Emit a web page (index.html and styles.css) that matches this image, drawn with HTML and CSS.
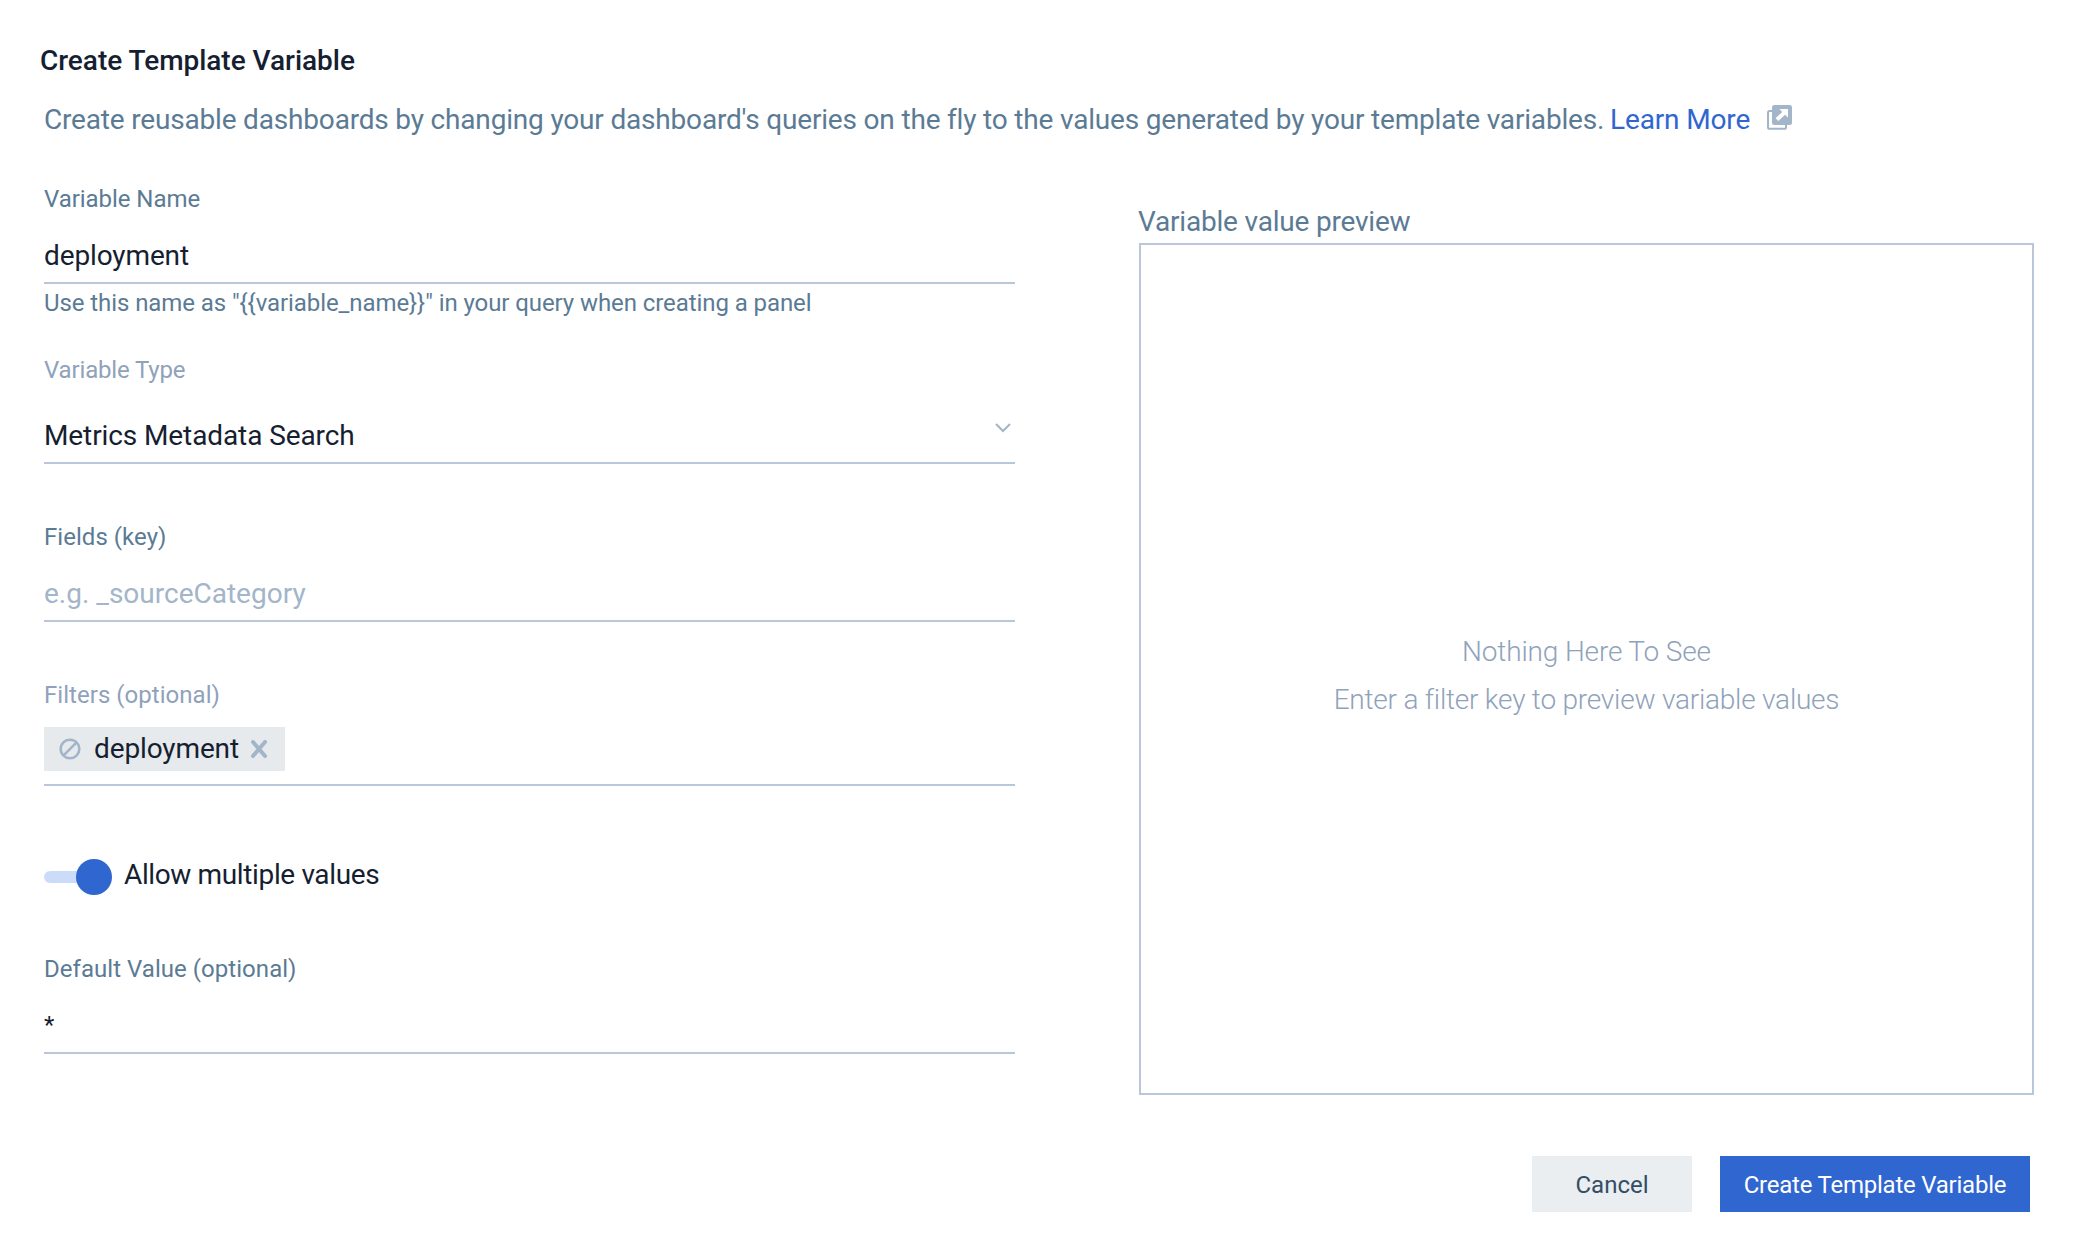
FILE: index.html
```html
<!DOCTYPE html>
<html lang="en">
<head>
<meta charset="utf-8">
<title>Create Template Variable</title>
<link rel="stylesheet" href="styles.css">
</head>
<body>
<main class="dialog">
  <h1 class="title">Create Template Variable</h1>
  <p class="intro"><span class="intro-text">Create reusable dashboards by changing your dashboard's queries on the fly to the values generated by your template variables.</span><a class="link" href="#">Learn More</a><svg class="external" width="26" height="26" viewBox="0 0 26 26"><path d="M5 6H2.600A1.600 1.600 0 0 0 1 7.600V22.200a1.600 1.600 0 0 0 1.600 1.600H17.400A1.600 1.600 0 0 0 19 22.200V20" fill="none" stroke="#a3b5c9" stroke-width="2"/><rect x="5" y="0" width="20" height="20" rx="2.500" fill="#a3b5c9"/><path d="M12.500 4h8.500v8.500l-3-2.800-6.600 6.400-2.800-2.800 6.600-6.400z" fill="#fff"/></svg></p>
  <div class="columns">
    <form class="form">
      <div class="field">
        <label class="label name">Variable Name</label>
        <div class="value deploy">deployment</div>
        <div class="hint">Use this name as "{{variable_name}}" in your query when creating a panel</div>
      </div>
      <div class="field type">
        <label class="label muted type-label">Variable Type</label>
        <div class="value select"><span>Metrics Metadata Search</span><svg class="chevron" width="18" height="12" viewBox="0 0 18 12"><path d="M2 2l7 7 7-7" fill="none" stroke="#a3b5c9" stroke-width="2"/></svg></div>
      </div>
      <div class="field keys">
        <label class="label">Fields (key)</label>
        <div class="value placeholder">e.g. _sourceCategory</div>
      </div>
      <div class="field filters">
        <label class="label muted">Filters (optional)</label>
        <div class="tags">
          <span class="chip"><svg width="22" height="22" viewBox="0 0 22 22"><g fill="none" stroke="#a3b5c9" stroke-width="2.600"><circle cx="11" cy="11" r="9.300"/><path d="M4.600 17.400L17.400 4.600"/></g></svg><span class="deploy chip-text">deployment</span><svg width="16" height="18" viewBox="0 0 16 18"><path d="M2 2l12 14M14 2L2 16" fill="none" stroke="#a3b5c9" stroke-width="4" stroke-linecap="round"/></svg></span>
        </div>
      </div>
      <div class="toggle-row">
        <span class="toggle"><span class="thumb"></span></span>
        <span class="toggle-text">Allow multiple values</span>
      </div>
      <div class="field default">
        <label class="label">Default Value (optional)</label>
        <div class="value star">*</div>
      </div>
    </form>
    <section class="preview">
      <h2 class="preview-title">Variable value preview</h2>
      <div class="preview-box">
        <p class="empty-title">Nothing Here To See</p>
        <p class="empty-text">Enter a filter key to preview variable values</p>
      </div>
    </section>
  </div>
  <footer class="actions">
    <button class="button cancel">Cancel</button>
    <button class="button primary">Create Template Variable</button>
  </footer>
</main>
</body>
</html>
```
FILE: styles.css
```css
* { box-sizing: border-box; }
body {
  margin: 0;
  background: #fff;
  color: #161e31;
  font: 400 28px/41px Roboto, sans-serif;
}
h1, h2, p { margin: 0; font-size: 28px; }
.dialog { height: 1256px; padding: 40px 54px 0 44px; }
.title { margin-left: -4px; font-weight: 500; letter-spacing: -0.03px; }
.intro { display: flex; margin-top: 18px; color: #5b7b95; }
.intro-text { width: 1566px; white-space: nowrap; letter-spacing: -0.18px; }
.link { color: #2f66d0; text-decoration: none; letter-spacing: -0.14px; }
.external { margin: 6px 0 0 17px; }
.columns { display: flex; justify-content: space-between; margin-top: 43px; }
.form { width: 971px; }
.label, .hint {
  display: block;
  color: #5b7b95;
  font-size: 24px;
  line-height: 32px;
}
.label { letter-spacing: 0.04px; }
.label.muted { color: #8fa2ba; }
.label.name { letter-spacing: -0.05px; }
.label.type-label { letter-spacing: -0.16px; }
.hint { margin-top: 3px; letter-spacing: -0.08px; }
.value {
  margin-top: 20px;
  padding-bottom: 6px;
  border-bottom: 2px solid #b9c7d8;
}
.deploy { letter-spacing: -0.12px; }
.type { margin-top: 35px; }
.select {
  display: flex;
  justify-content: space-between;
  margin-top: 29px;
  letter-spacing: -0.1px;
}
.chevron { margin: 7px 3px 0 0; }
.keys, .filters { margin-top: 57px; }
.placeholder { color: #a3b5c9; }
.tags {
  display: flex;
  margin-top: 16px;
  padding-bottom: 13px;
  border-bottom: 2px solid #b9c7d8;
}
.chip {
  display: flex;
  align-items: center;
  width: 241px;
  height: 44px;
  padding-left: 15px;
  background: #e6eaed;
}
.chip-text { width: 170px; padding: 0 0 1px 13px; }
.toggle-row { display: flex; gap: 12px; margin-top: 68px; }
.toggle {
  display: flex;
  justify-content: flex-end;
  align-items: center;
  width: 68px;
  height: 12px;
  margin-top: 17px;
  border-radius: 6px;
  background: #cbdcfa;
}
.thumb {
  flex: none;
  width: 36px;
  height: 36px;
  border-radius: 50%;
  background: #2f66d0;
}
.toggle-text { letter-spacing: -0.37px; }
.default { margin-top: 58px; }
.star { font-size: 24px; }
.preview { width: 895px; padding-top: 18px; }
.preview-title {
  margin-left: -1px;
  color: #5b7b95;
  font-weight: 400;
  letter-spacing: -0.2px;
}
.preview-box {
  display: flex;
  flex-direction: column;
  align-items: center;
  gap: 7px;
  height: 852px;
  margin-top: 1px;
  padding-top: 386px;
  border: 2px solid #b9c7d8;
  color: #8fa2ba;
  font-weight: 300;
}
.empty-title { letter-spacing: -0.15px; }
.empty-text { letter-spacing: -0.22px; }
.actions {
  display: flex;
  justify-content: flex-end;
  gap: 28px;
  margin-top: 61px;
  padding-right: 4px;
}
.button {
  height: 56px;
  padding: 1px 0 0;
  border: 0;
  font: 400 24px/32px Roboto, sans-serif;
}
.cancel { width: 160px; background: #eaeef1; color: #344d66; }
.primary {
  width: 310px;
  background: #2f66d0;
  color: #fff;
  letter-spacing: -0.23px;
}
```
